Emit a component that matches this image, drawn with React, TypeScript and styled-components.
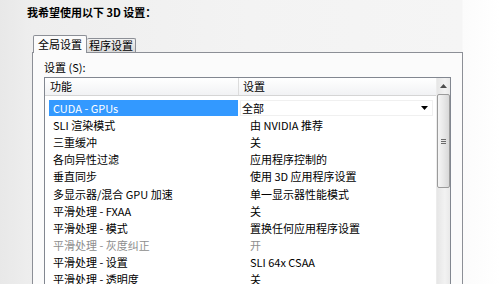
import styled, { createGlobalStyle } from "styled-components";

const GlobalStyle = createGlobalStyle`
  html, body { margin: 0; padding: 0; }
  body {
    width: 500px;
    height: 284px;
    overflow: hidden;
    background: linear-gradient(to right, #e8e8e8 0, #eeeeee 32px, #f3f3f3 250px, #f5f5f5 462px, #fbfbfb 463px, #ffffff 500px);
    font-family: "Noto Sans CJK SC", "Liberation Sans", sans-serif;
    font-size: 11px;
    color: #000;
  }
`;

type Row = { name: string; value: string; muted?: boolean };

const rows: Row[] = [
  { name: "CUDA - GPUs", value: "全部" },
  { name: "SLI 渲染模式", value: "由 NVIDIA 推荐" },
  { name: "三重缓冲", value: "关" },
  { name: "各向异性过滤", value: "应用程序控制的" },
  { name: "垂直同步", value: "使用 3D 应用程序设置" },
  { name: "多显示器/混合 GPU 加速", value: "单一显示器性能模式" },
  { name: "平滑处理 - FXAA", value: "关" },
  { name: "平滑处理 - 模式", value: "置换任何应用程序设置" },
  { name: "平滑处理 - 灰度纠正", value: "开", muted: true },
  { name: "平滑处理 - 设置", value: "SLI 64x CSAA" },
  { name: "平滑处理 - 透明度", value: "关" },
];

export default function App() {
  return (
    <>
      <GlobalStyle />
      <Page>
        <Title>我希望使用以下 3D 设置：</Title>
        <TabArea>
          <TabStrip>
            <Tab $active>全局设置</Tab>
            <Tab>程序设置</Tab>
          </TabStrip>
          <Panel>
            <Label>设置 (S):</Label>
            <ListBox>
              <ListContent>
                <Header>
                  <HeaderCell>功能</HeaderCell>
                  <HeaderCell $divider>设置</HeaderCell>
                </Header>
                <Rows>
                  {rows.map((r, i) => (
                    <RowLine key={r.name} $muted={r.muted}>
                      <NameCell $selected={i === 0}>{r.name}</NameCell>
                      {i === 0 ? (
                        <Dropdown>
                          <span>{r.value}</span>
                          <svg width="7" height="4" viewBox="0 0 7 4">
                            <path d="M0 0h7L3.5 4z" fill="#000" />
                          </svg>
                        </Dropdown>
                      ) : (
                        <ValueCell>{r.value}</ValueCell>
                      )}
                    </RowLine>
                  ))}
                </Rows>
              </ListContent>
              <ScrollBar>
                <ScrollButton>
                  <svg width="7" height="4" viewBox="0 0 7 4">
                    <path d="M3.5 0L7 4H0z" fill="#4d4d4d" />
                  </svg>
                </ScrollButton>
                <Thumb>
                  <Grip>
                    <i />
                    <i />
                    <i />
                  </Grip>
                </Thumb>
              </ScrollBar>
            </ListBox>
          </Panel>
        </TabArea>
      </Page>
    </>
  );
}

//css-style
const Page = styled.div`
  display: flex;
  flex-direction: column;
  padding-top: 4px;
`;

const Title = styled.div`
  padding-left: 27px;
  line-height: 16px;
  font-weight: 700;
`;

const TabArea = styled.div`
  margin: 15px 0 0 32px;
  width: 431px;
  display: flex;
  flex-direction: column;
`;

const TabStrip = styled.div`
  display: flex;
  align-items: flex-end;
  height: 17px;
  padding-left: 1px;
  position: relative;
  z-index: 1;
`;

const Tab = styled.div<{ $active?: boolean }>`
  box-sizing: border-box;
  height: ${(p) => (p.$active ? "18px" : "14px")};
  margin-bottom: ${(p) => (p.$active ? "-1px" : "0")};
  padding: 0 ${(p) => (p.$active ? "4px" : "2px")};
  border: 1px solid #8c8f96;
  border-bottom: none;
  border-left: ${(p) => (p.$active ? "1px solid #8c8f96" : "none")};
  background: ${(p) => (p.$active ? "#fbfbfb" : "linear-gradient(#f2f2f2, #d9d9d9)")};
  line-height: ${(p) => (p.$active ? "16px" : "13px")};
  border-radius: 2px 2px 0 0;
`;

const Panel = styled.div`
  box-sizing: border-box;
  height: 240px;
  border: 1px solid #8c8f96;
  background: #fbfbfb;
  padding: 7px 11px 0 11px;
  display: flex;
  flex-direction: column;
`;

const Label = styled.div`
  line-height: 14px;
  margin-bottom: 3px;
`;

const ListBox = styled.div`
  display: flex;
  height: 220px;
  border: 1px solid #828790;
  background: #fff;
`;

const ListContent = styled.div`
  flex: 1;
  display: flex;
  flex-direction: column;
  min-width: 0;
`;

const Header = styled.div`
  display: grid;
  grid-template-columns: 193px 1fr;
  height: 17px;
  border-bottom: 1px solid #d5d5d5;
  background: linear-gradient(#ffffff, #f1f2f4);
`;

const HeaderCell = styled.div<{ $divider?: boolean }>`
  line-height: 17px;
  padding-left: ${(p) => (p.$divider ? "4px" : "5px")};
  border-left: ${(p) => (p.$divider ? "1px solid #dcdcdc" : "none")};
`;

const Rows = styled.div`
  padding: 3px 0 0 4px;
  display: flex;
  flex-direction: column;
`;

const RowLine = styled.div<{ $muted?: boolean }>`
  display: grid;
  grid-template-columns: 189px 1fr;
  height: 17.2px;
  align-items: center;
  color: ${(p) => (p.$muted ? "#8e8e8e" : "#000")};
`;

const NameCell = styled.div<{ $selected?: boolean }>`
  height: 16px;
  line-height: 16px;
  padding-left: 4px;
  background: ${(p) => (p.$selected ? "#3399ff" : "transparent")};
  color: ${(p) => (p.$selected ? "#fff" : "inherit")};
  white-space: nowrap;
`;

const ValueCell = styled.div`
  padding-left: 12px;
  line-height: 16px;
  white-space: nowrap;
`;

const Dropdown = styled.div`
  display: flex;
  align-items: center;
  justify-content: space-between;
  height: 16px;
  margin: 0 3px 0 2px;
  padding: 0 4px 0 1px;
  background: #fff;
  border: 1px solid #f0f0f0;
  box-sizing: border-box;
  line-height: 14px;
`;

const ScrollBar = styled.div`
  width: 13px;
  display: flex;
  flex-direction: column;
  background: linear-gradient(to right, #e6e6e6, #f2f2f2 60%, #e9e9e9);
  border-left: 1px solid #ececec;
`;

const ScrollButton = styled.div`
  height: 15px;
  display: flex;
  align-items: center;
  justify-content: center;
`;

const Thumb = styled.div`
  box-sizing: border-box;
  height: 94px;
  margin: 1px 0 0 0;
  border: 1px solid #9b9b9b;
  border-radius: 2px;
  background: linear-gradient(to right, #f5f5f5, #e8e8e8 50%, #d8d8d8);
  display: flex;
  align-items: center;
  justify-content: center;
`;

const Grip = styled.div`
  display: flex;
  flex-direction: column;
  gap: 1px;
  i {
    display: block;
    width: 5px;
    height: 1px;
    background: #6b6b6b;
  }
`;
